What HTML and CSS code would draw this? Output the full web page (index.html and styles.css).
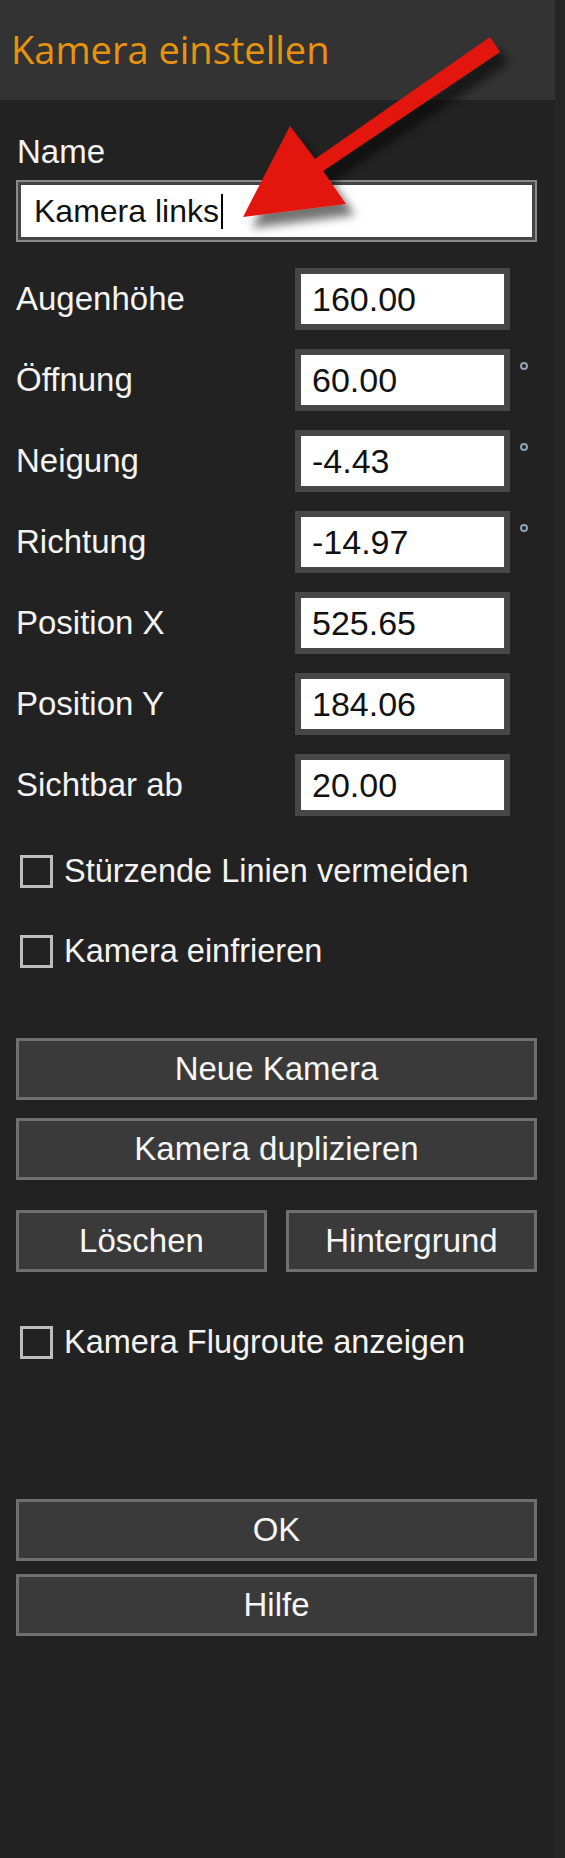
FILE: index.html
```html
<!DOCTYPE html>
<html lang="de">
<head>
<meta charset="utf-8">
<title>Kamera einstellen</title>
<link rel="stylesheet" href="styles.css">
</head>
<body>
<div class="panel">
  <header class="head">
    <h1 class="title">Kamera einstellen</h1>
  </header>
  <main class="content">
    <div class="name-label">Name</div>
    <div class="text-field"><span class="tf-value">Kamera links</span><span class="caret"></span></div>

    <div class="fields">
      <div class="row"><span class="label">Augenhöhe</span><div class="num">160.00</div></div>
      <div class="row"><span class="label">Öffnung</span><div class="num">60.00</div><span class="deg"></span></div>
      <div class="row"><span class="label">Neigung</span><div class="num">-4.43</div><span class="deg"></span></div>
      <div class="row"><span class="label">Richtung</span><div class="num">-14.97</div><span class="deg"></span></div>
      <div class="row"><span class="label">Position X</span><div class="num">525.65</div></div>
      <div class="row"><span class="label">Position Y</span><div class="num">184.06</div></div>
      <div class="row"><span class="label">Sichtbar ab</span><div class="num">20.00</div></div>
    </div>

    <div class="checks">
      <div class="check"><span class="box"></span><span>Stürzende Linien vermeiden</span></div>
      <div class="check"><span class="box"></span><span>Kamera einfrieren</span></div>
    </div>

    <div class="buttons">
      <div class="btn">Neue Kamera</div>
      <div class="btn btn-dup">Kamera duplizieren</div>
      <div class="btn-pair">
        <div class="btn">Löschen</div>
        <div class="btn">Hintergrund</div>
      </div>
    </div>

    <div class="check check-route"><span class="box"></span><span>Kamera Flugroute anzeigen</span></div>

    <div class="buttons buttons-end">
      <div class="btn">OK</div>
      <div class="btn btn-help">Hilfe</div>
    </div>
  </main>
</div>

<svg class="arrow" width="565" height="260" viewBox="0 0 565 260" aria-hidden="true">
  <defs>
    <filter id="shadow" x="-20%" y="-20%" width="150%" height="150%">
      <feDropShadow dx="9" dy="11" stdDeviation="5" flood-color="#000" flood-opacity="0.55"/>
    </filter>
  </defs>
  <polygon filter="url(#shadow)" fill="#e2190f"
    points="490,37 500,52 323,171 346,204 243,217 290,126 315,159"/>
</svg>
</body>
</html>
```

FILE: styles.css
```css
html {
  background: #262626;
}

body {
  margin: 0;
  width: 565px;
  min-height: 1858px;
  background: #262626;
  font-family: "Liberation Sans", Arial, sans-serif;
  color: #f4f4f4;
  position: relative;
  overflow: hidden;
}

.panel {
  width: 555px;
  min-height: 1858px;
  background: #222222;
}

.head {
  height: 100px;
  box-sizing: border-box;
  background: #333333;
  padding: 24px 0 0 11px;
}

.title {
  margin: 0;
  font-family: "Open Sans", "DejaVu Sans", sans-serif;
  font-weight: 400;
  font-size: 38px;
  line-height: 50px;
  color: #e8930f;
}

.content {
  padding: 32px 18px 0 16px;
  display: flex;
  flex-direction: column;
}

.name-label {
  font-size: 33px;
  line-height: 40px;
  height: 40px;
  padding-left: 1px;
}

.text-field {
  margin-top: 8px;
  height: 62px;
  box-sizing: border-box;
  border: 2px solid #8a8a8a;
  box-shadow: inset 0 0 0 3px #454545;
  background: #ffffff;
  display: flex;
  align-items: center;
  padding-left: 16px;
  color: #111111;
  font-size: 32px;
}

.caret {
  width: 2px;
  height: 35px;
  background: #000;
  margin-left: 2px;
}

.fields {
  margin-top: 26px;
  display: flex;
  flex-direction: column;
  gap: 19px;
}

.row {
  display: flex;
  align-items: center;
  height: 62px;
}

.label {
  width: 279px;
  font-size: 33px;
  line-height: 40px;
}

.num {
  width: 215px;
  height: 62px;
  box-sizing: border-box;
  border: 6px solid #474747;
  background: #ffffff;
  display: flex;
  align-items: center;
  padding-left: 11px;
  color: #111111;
  font-size: 34px;
}

.deg {
  align-self: flex-start;
  width: 4px;
  height: 4px;
  margin: 13px 0 0 10px;
  border: 2px solid #8ea2b8;
  border-radius: 50%;
}

.checks {
  margin-top: 35px;
  display: flex;
  flex-direction: column;
  gap: 40px;
}

.check {
  display: flex;
  align-items: center;
  height: 40px;
  font-size: 32.5px;
  line-height: 40px;
}

.box {
  width: 33px;
  height: 33px;
  box-sizing: border-box;
  border: 3px solid #bdbdbd;
  margin: 0 11px 0 4px;
  flex: none;
}

.buttons {
  margin-top: 67px;
  display: flex;
  flex-direction: column;
}

.btn {
  height: 62px;
  box-sizing: border-box;
  border: 3px solid #6f6f6f;
  background: #3a3a3a;
  display: flex;
  align-items: center;
  justify-content: center;
  font-size: 33px;
  color: #f6f6f6;
}

.btn-dup {
  margin-top: 18px;
}

.btn-pair {
  margin-top: 30px;
  display: grid;
  grid-template-columns: 1fr 1fr;
  gap: 19px;
}

.check-route {
  margin-top: 50px;
}

.buttons-end {
  margin-top: 137px;
}

.btn-help {
  margin-top: 13px;
}

.arrow {
  position: absolute;
  left: 0;
  top: 0;
  pointer-events: none;
}
```
